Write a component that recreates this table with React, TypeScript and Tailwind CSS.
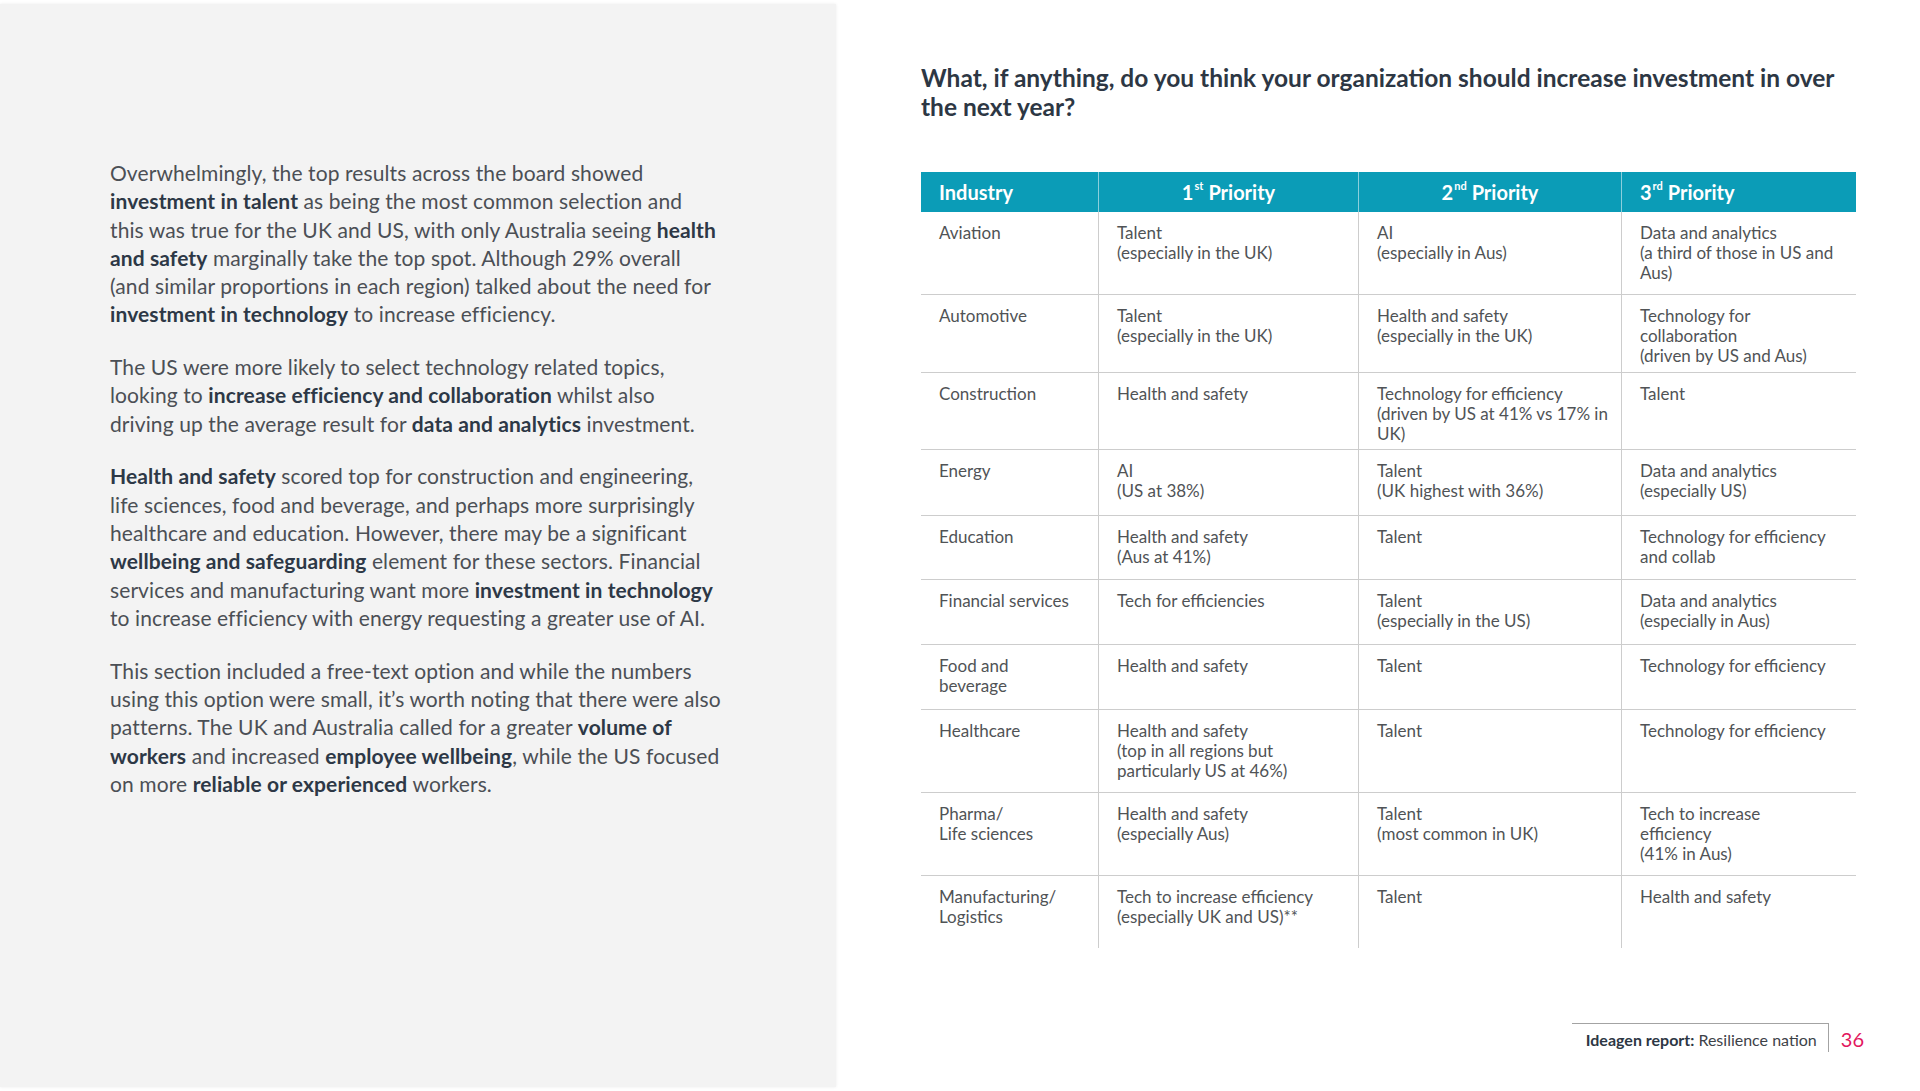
import React from "react";

const font = { fontFamily: "Lato, 'Liberation Sans', sans-serif" };

type Row = { h: string; cells: React.ReactNode[]; last?: boolean };

const rows: Row[] = [
  { h: "h-[83px]", cells: [<>Aviation</>, <>Talent<br />(especially in the UK)</>, <>AI<br />(especially in Aus)</>, <>Data and analytics<br />(a third of those in US and<br />Aus)</>] },
  { h: "h-[78px]", cells: [<>Automotive</>, <>Talent<br />(especially in the UK)</>, <>Health and safety<br />(especially in the UK)</>, <>Technology for<br />collaboration<br />(driven by US and Aus)</>] },
  { h: "h-[77px]", cells: [<>Construction</>, <>Health and safety</>, <>Technology for efficiency<br />(driven by US at 41% vs 17% in<br />UK)</>, <>Talent</>] },
  { h: "h-[66px]", cells: [<>Energy</>, <>AI<br />(US at 38%)</>, <>Talent<br />(UK highest with 36%)</>, <>Data and analytics<br />(especially US)</>] },
  { h: "h-[64px]", cells: [<>Education</>, <>Health and safety<br />(Aus at 41%)</>, <>Talent</>, <>Technology for efficiency<br />and collab</>] },
  { h: "h-[65px]", cells: [<>Financial services</>, <>Tech for efficiencies</>, <>Talent<br />(especially in the US)</>, <>Data and analytics<br />(especially in Aus)</>] },
  { h: "h-[65px]", cells: [<>Food and<br />beverage</>, <>Health and safety</>, <>Talent</>, <>Technology for efficiency</>] },
  { h: "h-[83px]", cells: [<>Healthcare</>, <>Health and safety<br />(top in all regions but<br />particularly US at 46%)</>, <>Talent</>, <>Technology for efficiency</>] },
  { h: "h-[83px]", cells: [<>Pharma/<br />Life sciences</>, <>Health and safety<br />(especially Aus)</>, <>Talent<br />(most common in UK)</>, <>Tech to increase<br />efficiency<br />(41% in Aus)</>] },
  { h: "h-[72px]", last: true, cells: [<>Manufacturing/<br />Logistics</>, <>Tech to increase efficiency<br />(especially UK and US)**</>, <>Talent</>, <>Health and safety</>] },
];

function B({ children }: { children: React.ReactNode }) {
  return <span className="font-bold text-[#2d3846]">{children}</span>;
}

export default function App() {
  return (
    <div className="w-[1920px] h-[1091px] bg-white flex overflow-hidden" style={font}>
      {/* Left panel */}
      <div className="w-[836px] h-[1083px] mt-[4px] bg-[#f3f3f3] shadow-[0_0_3px_rgba(0,0,0,0.08)] shrink-0 pl-[110px] pt-[155px]">
        <div className="w-[680px] text-[21px] leading-[28.3px] tracking-[0.1px] text-[#4b4f55] flex flex-col gap-[24.4px] whitespace-nowrap">
          <p>
            Overwhelmingly, the top results across the board showed<br />
            <B>investment in talent</B> as being the most common selection and<br />
            this was true for the UK and US, with only Australia seeing <B>health</B><br />
            <B>and safety</B> marginally take the top spot. Although 29% overall<br />
            (and similar proportions in each region) talked about the need for<br />
            <B>investment in technology</B> to increase efficiency.
          </p>
          <p>
            The US were more likely to select technology related topics,<br />
            looking to <B>increase efficiency and collaboration</B> whilst also<br />
            driving up the average result for <B>data and analytics</B> investment.
          </p>
          <p>
            <B>Health and safety</B> scored top for construction and engineering,<br />
            life sciences, food and beverage, and perhaps more surprisingly<br />
            healthcare and education. However, there may be a significant<br />
            <B>wellbeing and safeguarding</B> element for these sectors. Financial<br />
            services and manufacturing want more <B>investment in technology</B><br />
            to increase efficiency with energy requesting a greater use of AI.
          </p>
          <p>
            This section included a free-text option and while the numbers<br />
            using this option were small, it’s worth noting that there were also<br />
            patterns. The UK and Australia called for a greater <B>volume of</B><br />
            <B>workers</B> and increased <B>employee wellbeing</B>, while the US focused<br />
            on more <B>reliable or experienced</B> workers.
          </p>
        </div>
      </div>

      {/* Right column */}
      <div className="ml-[85px] w-[999px] flex flex-col pt-[64px] pb-[39px]">
        <h1 className="w-[935px] text-[24.5px] leading-[28.5px] font-bold text-[#2d3744]">
          What, if anything, do you think your organization should increase investment in over the next year?
        </h1>

        <div className="mt-[51px] w-[935px]">
          <div className="grid grid-cols-[177px_260px_263px_235px] h-[40px] bg-[#0b9cb7] text-white text-[20px] font-bold">
            <div className="flex items-center pl-[18px]">Industry</div>
            <div className="flex items-center justify-center border-l border-[#8ccfdc]">
              1<sup className="text-[11px] -top-[6px] ml-[1px] mr-[5px]">st</sup>Priority
            </div>
            <div className="flex items-center justify-center border-l border-[#8ccfdc]">
              2<sup className="text-[11px] -top-[6px] ml-[1px] mr-[5px]">nd</sup>Priority
            </div>
            <div className="flex items-center pl-[18px] border-l border-[#8ccfdc]">
              3<sup className="text-[11px] -top-[6px] ml-[1px] mr-[5px]">rd</sup>Priority
            </div>
          </div>
          {rows.map((r, i) => (
            <div
              key={i}
              className={`grid grid-cols-[177px_260px_263px_235px] ${r.h} ${r.last ? "" : "border-b border-[#cdcdcd]"} text-[17px] leading-[20px] text-[#505356]`}
            >
              {r.cells.map((c, j) => (
                <div key={j} className={`pl-[18px] pt-[11px] whitespace-nowrap ${j > 0 ? "border-l border-[#cdcdcd]" : ""}`}>
                  {c}
                </div>
              ))}
            </div>
          ))}
        </div>

        <div className="mt-auto flex items-start justify-end pr-[56px]">
          <div className="w-[257px] h-[29px] border-t border-r border-[#a3a3a3] flex justify-end pr-[11px] pt-[7px] text-[16px] leading-[18px] text-[#3d4248] whitespace-nowrap">
            <span className="font-bold text-[#2d3744] mr-[4px]">Ideagen report:</span>Resilience nation
          </div>
          <div className="ml-[12px] pt-[4px] text-[20px] leading-[24px] text-[#e2175e]">36</div>
        </div>
      </div>
    </div>
  );
}
